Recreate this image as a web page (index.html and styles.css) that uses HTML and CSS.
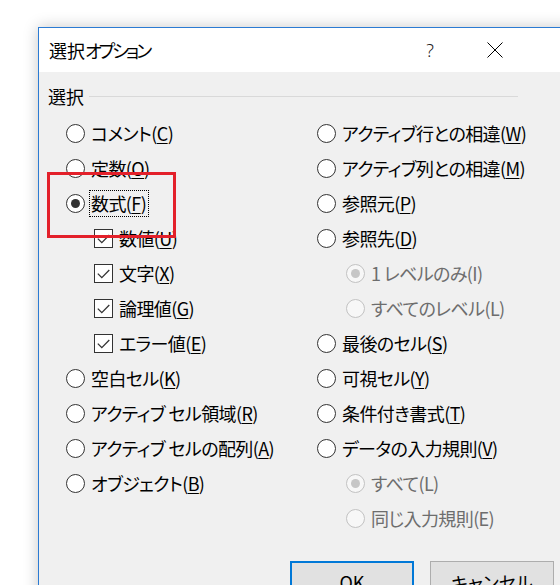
FILE: index.html
```html
<!DOCTYPE html>
<html lang="ja">
<head>
<meta charset="utf-8">
<title>選択オプション</title>
<link rel="stylesheet" href="styles.css">
</head>
<body>
<div class="dialog">
  <div class="titlebar">
    <span class="title">選択<span class="kana">オプション</span></span>
    <span class="help">?</span>
    <span class="close"><svg width="16" height="16" viewBox="0 0 16 16"><path d="M0.5 0.5 L15.5 15.5 M15.5 0.5 L0.5 15.5" stroke="#000" stroke-width="1" fill="none"/></svg></span>
  </div>
  <div class="body">
    <div class="group">
      <div class="group-head"><span>選択</span><span class="rule"></span></div>
      <div class="cols">
        <div class="col">
          <div class="row"><span class="radio"></span><span class="lbl">コメント(<u>C</u>)</span></div>
          <div class="row"><span class="radio"></span><span class="lbl">定数(<u>O</u>)</span></div>
          <div class="row"><span class="radio on"></span><span class="lbl focus">数式(<u>F</u>)</span></div>
          <div class="row sub"><span class="check"><svg width="17" height="17" viewBox="0 0 17 17"><path d="M2.8 8.6 L6.8 12.6 L14.3 5" stroke="#333" stroke-width="1.3" fill="none"/></svg></span><span class="lbl">数値(<u>U</u>)</span></div>
          <div class="row sub"><span class="check"><svg width="17" height="17" viewBox="0 0 17 17"><path d="M2.8 8.6 L6.8 12.6 L14.3 5" stroke="#333" stroke-width="1.3" fill="none"/></svg></span><span class="lbl">文字(<u>X</u>)</span></div>
          <div class="row sub"><span class="check"><svg width="17" height="17" viewBox="0 0 17 17"><path d="M2.8 8.6 L6.8 12.6 L14.3 5" stroke="#333" stroke-width="1.3" fill="none"/></svg></span><span class="lbl">論理値(<u>G</u>)</span></div>
          <div class="row sub"><span class="check"><svg width="17" height="17" viewBox="0 0 17 17"><path d="M2.8 8.6 L6.8 12.6 L14.3 5" stroke="#333" stroke-width="1.3" fill="none"/></svg></span><span class="lbl">エラー値(<u>E</u>)</span></div>
          <div class="row"><span class="radio"></span><span class="lbl">空白セル(<u>K</u>)</span></div>
          <div class="row"><span class="radio"></span><span class="lbl">アクティブ セル領域(<u>R</u>)</span></div>
          <div class="row"><span class="radio"></span><span class="lbl">アクティブ セルの配列(<u>A</u>)</span></div>
          <div class="row"><span class="radio"></span><span class="lbl">オブジェクト(<u>B</u>)</span></div>
        </div>
        <div class="col">
          <div class="row"><span class="radio"></span><span class="lbl">アクティブ行との相違(<u>W</u>)</span></div>
          <div class="row"><span class="radio"></span><span class="lbl">アクティブ列との相違(<u>M</u>)</span></div>
          <div class="row"><span class="radio"></span><span class="lbl">参照元(<u>P</u>)</span></div>
          <div class="row"><span class="radio"></span><span class="lbl">参照先(<u>D</u>)</span></div>
          <div class="row sub-r disabled"><span class="radio on"></span><span class="lbl">1 レベルのみ(I)</span></div>
          <div class="row sub-r disabled"><span class="radio"></span><span class="lbl">すべてのレベル(L)</span></div>
          <div class="row"><span class="radio"></span><span class="lbl">最後のセル(<u>S</u>)</span></div>
          <div class="row"><span class="radio"></span><span class="lbl">可視セル(<u>Y</u>)</span></div>
          <div class="row"><span class="radio"></span><span class="lbl">条件付き書式(<u>T</u>)</span></div>
          <div class="row"><span class="radio"></span><span class="lbl">データの入力規則(<u>V</u>)</span></div>
          <div class="row sub-r disabled"><span class="radio on"></span><span class="lbl">すべて(L)</span></div>
          <div class="row sub-r disabled"><span class="radio"></span><span class="lbl">同じ入力規則(E)</span></div>
        </div>
      </div>
    </div>
    <div class="buttons">
      <span class="btn default">OK</span>
      <span class="btn">キャンセル</span>
    </div>
    <div class="annotation"></div>
  </div>
</div>
</body>
</html>
```

FILE: styles.css
```css
html, body {
  margin: 0;
  padding: 0;
  background: #ffffff;
  overflow: hidden;
  width: 560px;
  height: 585px;
}

body {
  font-family: "Noto Sans CJK JP", "Noto Sans", sans-serif;
  font-size: 18px;
  font-feature-settings: "palt" 1;
  color: #000;
}

.dialog {
  margin: 27px 0 0 38px;
  width: 560px;
  border: 1px solid #2b7bd3;
  box-shadow: 0 0 14px rgba(0, 0, 0, 0.22);
  background: #f0f0f0;
}

.titlebar {
  height: 44px;
  background: #fff;
  display: flex;
  align-items: center;
  padding-left: 10px;
}

.title {
  flex: 1;
  line-height: 44px;
}

.title .kana {
  letter-spacing: -3px;
}

.help {
  font-family: "Noto Sans", sans-serif;
  font-weight: 300;
  font-size: 18px;
  width: 20px;
  text-align: center;
  margin-right: 47px;
  color: #222;
}

.close {
  display: flex;
  width: 16px;
  height: 16px;
  margin-right: 96px;
}

.body {
  position: relative;
  padding: 11px 0 40px 9px;
}

.group {
  width: 470px;
}

.group-head {
  display: flex;
  align-items: center;
  gap: 5px;
  height: 26px;
  line-height: 26px;
  margin-bottom: 7px;
}

.rule {
  flex: 1;
  border-top: 1px solid #d9d9d9;
  margin-top: 1px;
}

.cols {
  display: grid;
  grid-template-columns: 251px 1fr;
  padding-left: 18px;
}

.col {
  display: flex;
  flex-direction: column;
}

.row {
  height: 35px;
  display: flex;
  align-items: center;
  gap: 4px;
  white-space: nowrap;
}

.row.sub {
  padding-left: 28px;
}

.row.sub-r {
  padding-left: 29px;
}

.lbl {
  line-height: 25px;
  padding: 0 2px 0 1px;
  border: 1px dotted transparent;
  letter-spacing: -0.6px;
}

.lbl.focus {
  border-color: #000;
}

.lbl u {
  text-decoration-thickness: 1px;
  text-underline-offset: 2px;
}

.radio {
  width: 19px;
  height: 19px;
  box-sizing: border-box;
  border-radius: 50%;
  border: 1.5px solid #333;
  background: #fff;
  position: relative;
  flex: none;
}

.radio.on::after {
  content: "";
  position: absolute;
  left: 3.5px;
  top: 3.5px;
  width: 9px;
  height: 9px;
  border-radius: 50%;
  background: #333;
}

.disabled .radio {
  border-color: #c2c2c2;
  background: #f7f7f7;
}

.disabled .radio.on::after {
  background: #c6c6c6;
}

.disabled .lbl {
  color: #6d6d6d;
}

.check {
  width: 19px;
  height: 19px;
  box-sizing: border-box;
  border: 1px solid #333;
  background: #fff;
  display: flex;
  flex: none;
}

.buttons {
  display: flex;
  gap: 16px;
  margin: 25px 0 0 242px;
}

.btn {
  width: 124px;
  height: 42px;
  box-sizing: border-box;
  border: 1px solid #adadad;
  background: #e1e1e1;
  display: flex;
  align-items: center;
  justify-content: center;
}

.btn.default {
  border: 2px solid #0078d7;
}

.annotation {
  position: absolute;
  left: 8px;
  top: 100px;
  width: 129px;
  height: 66px;
  box-sizing: border-box;
  border: 3px solid #e3202a;
}
```
